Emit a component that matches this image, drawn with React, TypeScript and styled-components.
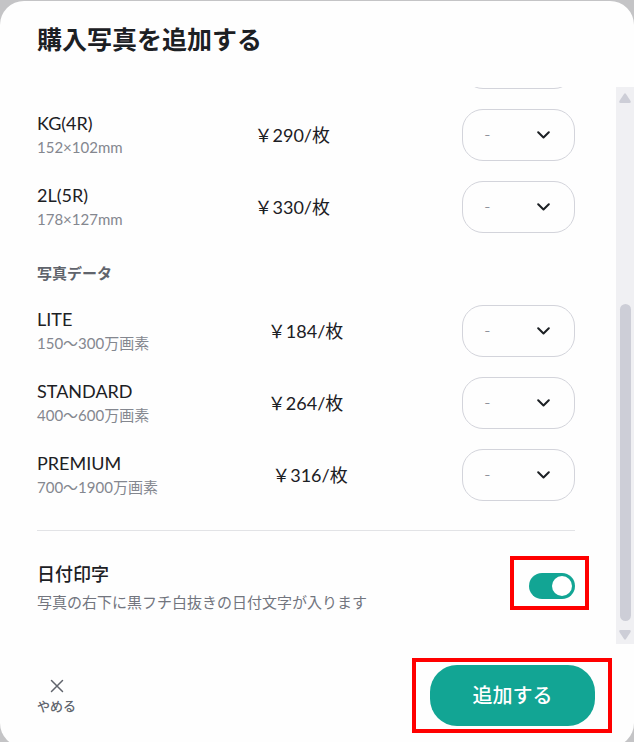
import { useState } from "react";
import styled, { createGlobalStyle } from "styled-components";

const GlobalStyle = createGlobalStyle`
  * {
    box-sizing: border-box;
  }
  body {
    margin: 0;
    padding-top: 1px;
    height: 100vh;
    overflow: hidden;
    background: #c4c4c6;
    color: #1c2024;
    font-family: Lato, "Noto Sans CJK JP", sans-serif;
  }
  button,
  select {
    font-family: inherit;
  }
`;

const Dialog = styled.main`
  display: grid;
  grid-template-rows: auto 1fr auto;
  height: calc(100vh + 4px);
  border-radius: 24px;
  background: #fefefe;
`;

const Header = styled.header`
  padding: 20px 37px 30px;
  h1 {
    margin: 0;
    font-size: 25px;
    line-height: 36px;
    font-weight: 700;
  }
`;

const Body = styled.div`
  display: flex;
  min-height: 0;
`;

const Content = styled.div`
  display: flex;
  flex: 1 1 0;
  flex-direction: column;
  justify-content: flex-end;
  gap: 20px;
  overflow: hidden;
  padding: 0 41px 30px 37px;
`;

const SectionTitle = styled.h2`
  margin: 0;
  padding-top: 8px;
  color: #60646c;
  font-size: 15px;
  line-height: 24px;
  font-weight: 700;
`;

const Row = styled.div`
  display: flex;
  flex-shrink: 0;
  align-items: center;
  justify-content: space-between;
`;

const RowLabel = styled.label`
  display: flex;
  flex-direction: column;
`;

const Name = styled.span<{ $strong?: boolean }>`
  font-size: 18px;
  line-height: 24px;
  font-weight: ${({ $strong }) => ($strong ? 500 : 400)};
`;

const Detail = styled.span<{ $light?: boolean }>`
  color: ${({ $light }) => ($light ? "#84878f" : "#72757e")};
  font-size: 15px;
  line-height: 24px;
`;

const Price = styled.span`
  font-size: 18px;
  line-height: 24px;
`;

const SelectBox = styled.div`
  position: relative;
  width: 113px;
  height: 52px;
  svg {
    position: absolute;
    top: 22px;
    right: 25px;
    pointer-events: none;
  }
`;

const Select = styled.select`
  appearance: none;
  width: 100%;
  height: 100%;
  padding: 0 21px 2px;
  border: 1px solid #d3d4db;
  border-radius: 21px;
  background: transparent;
  color: #72757e;
  font-size: 18px;
  font-weight: 300;
`;

const DateRow = styled(Row)`
  margin-top: 9px;
  padding-top: 31px;
  border-top: 1px solid #e2e3e6;
  ${RowLabel} {
    gap: 4px;
  }
`;

const Marked = styled.div<{ $inset: string }>`
  position: relative;
  display: flex;
  &::after {
    content: "";
    position: absolute;
    inset: ${({ $inset }) => $inset};
    border: 4px solid #ff0000;
    pointer-events: none;
  }
`;

const Switch = styled.input`
  appearance: none;
  display: flex;
  justify-content: flex-start;
  width: 46px;
  height: 26px;
  margin: 0 0 5px;
  padding: 3px;
  border-radius: 13px;
  background: #cdced6;
  cursor: pointer;
  &::before {
    content: "";
    width: 20px;
    height: 20px;
    border-radius: 50%;
    background: #fff;
  }
  &:checked {
    justify-content: flex-end;
    background: #12a594;
  }
`;

const Scrollbar = styled.div`
  display: flex;
  flex-direction: column;
  align-items: center;
  justify-content: space-between;
  width: 18px;
  padding: 6px 0 4px;
  background: #f0f0f3;
`;

const Thumb = styled.div`
  width: 11px;
  height: 58%;
  margin: auto 0 9px;
  border-radius: 6px;
  background: #cdced7;
`;

const Footer = styled.footer`
  display: flex;
  align-items: flex-start;
  justify-content: space-between;
  padding: 21px 39px 21px 37px;
`;

const CancelButton = styled.button`
  display: flex;
  flex-direction: column;
  align-items: center;
  gap: 4px;
  padding: 14px 0 0;
  border: none;
  background: none;
  color: #60646c;
  font-size: 13px;
  line-height: 18px;
  font-weight: 500;
  cursor: pointer;
`;

const AddButton = styled.button`
  width: 165px;
  height: 61px;
  padding: 0 0 2px;
  border: none;
  border-radius: 27px;
  background: #12a594;
  color: #fff;
  font-size: 20px;
  font-weight: 500;
  cursor: pointer;
`;

type Product = { id: string; name: string; detail: string; price: string };

const prints: Product[] = [
  { id: "kg", name: "KG(4R)", detail: "152×102mm", price: "￥290/枚" },
  { id: "2l", name: "2L(5R)", detail: "178×127mm", price: "￥330/枚" },
];

const photoData: Product[] = [
  { id: "lite", name: "LITE", detail: "150〜300万画素", price: "￥184/枚" },
  { id: "standard", name: "STANDARD", detail: "400〜600万画素", price: "￥264/枚" },
  { id: "premium", name: "PREMIUM", detail: "700〜1900万画素", price: "￥316/枚" },
];

function QuantitySelect({ id }: { id: string }) {
  return (
    <SelectBox>
      <Select id={id}>
        <option>-</option>
      </Select>
      <svg width="13" height="8" viewBox="0 0 13 8" fill="none">
        <path
          d="M1.2 1.2 6.5 6.5 11.8 1.2"
          stroke="#1c2024"
          strokeWidth="2"
          strokeLinecap="round"
          strokeLinejoin="round"
        />
      </svg>
    </SelectBox>
  );
}

function ProductRow({ product }: { product: Product }) {
  return (
    <Row>
      <RowLabel htmlFor={product.id}>
        <Name>{product.name}</Name>
        <Detail $light>{product.detail}</Detail>
      </RowLabel>
      <Price>{product.price}</Price>
      <QuantitySelect id={product.id} />
    </Row>
  );
}

export default function App() {
  const [datePrint, setDatePrint] = useState(true);

  return (
    <>
      <GlobalStyle />
      <Dialog>
        <Header>
          <h1>購入写真を追加する</h1>
        </Header>
        <Body>
          <Content>
            <Row>
              <RowLabel htmlFor="previous" />
              <QuantitySelect id="previous" />
            </Row>
            {prints.map((product) => (
              <ProductRow key={product.id} product={product} />
            ))}
            <SectionTitle>写真データ</SectionTitle>
            {photoData.map((product) => (
              <ProductRow key={product.id} product={product} />
            ))}
            <DateRow>
              <RowLabel htmlFor="date-print">
                <Name $strong>日付印字</Name>
                <Detail>写真の右下に黒フチ白抜きの日付文字が入ります</Detail>
              </RowLabel>
              <Marked $inset="-17px -14px -6px -19px">
                <Switch
                  type="checkbox"
                  id="date-print"
                  checked={datePrint}
                  onChange={() => setDatePrint(!datePrint)}
                />
              </Marked>
            </DateRow>
          </Content>
          <Scrollbar>
            <svg width="12" height="10" viewBox="0 0 12 10">
              <path d="M5 1Q6-.6 7 1L11.6 8Q12.2 10 10.5 10H1.5Q-.2 10 .4 8Z" fill="#cdced7" />
            </svg>
            <Thumb />
            <svg width="12" height="10" viewBox="0 0 12 10">
              <path d="M5 9Q6 10.6 7 9L11.6 2Q12.2 0 10.5 0H1.5Q-.2 0 .4 2Z" fill="#cdced7" />
            </svg>
          </Scrollbar>
        </Body>
        <Footer>
          <CancelButton type="button">
            <svg width="14" height="14" viewBox="0 0 14 14" fill="none">
              <path
                d="M1.5 1.5 12.5 12.5M12.5 1.5 1.5 12.5"
                stroke="#60646c"
                strokeWidth="1.5"
                strokeLinecap="round"
              />
            </svg>
            やめる
          </CancelButton>
          <Marked $inset="-7px -17px -7px -18px">
            <AddButton type="button">追加する</AddButton>
          </Marked>
        </Footer>
      </Dialog>
    </>
  );
}
